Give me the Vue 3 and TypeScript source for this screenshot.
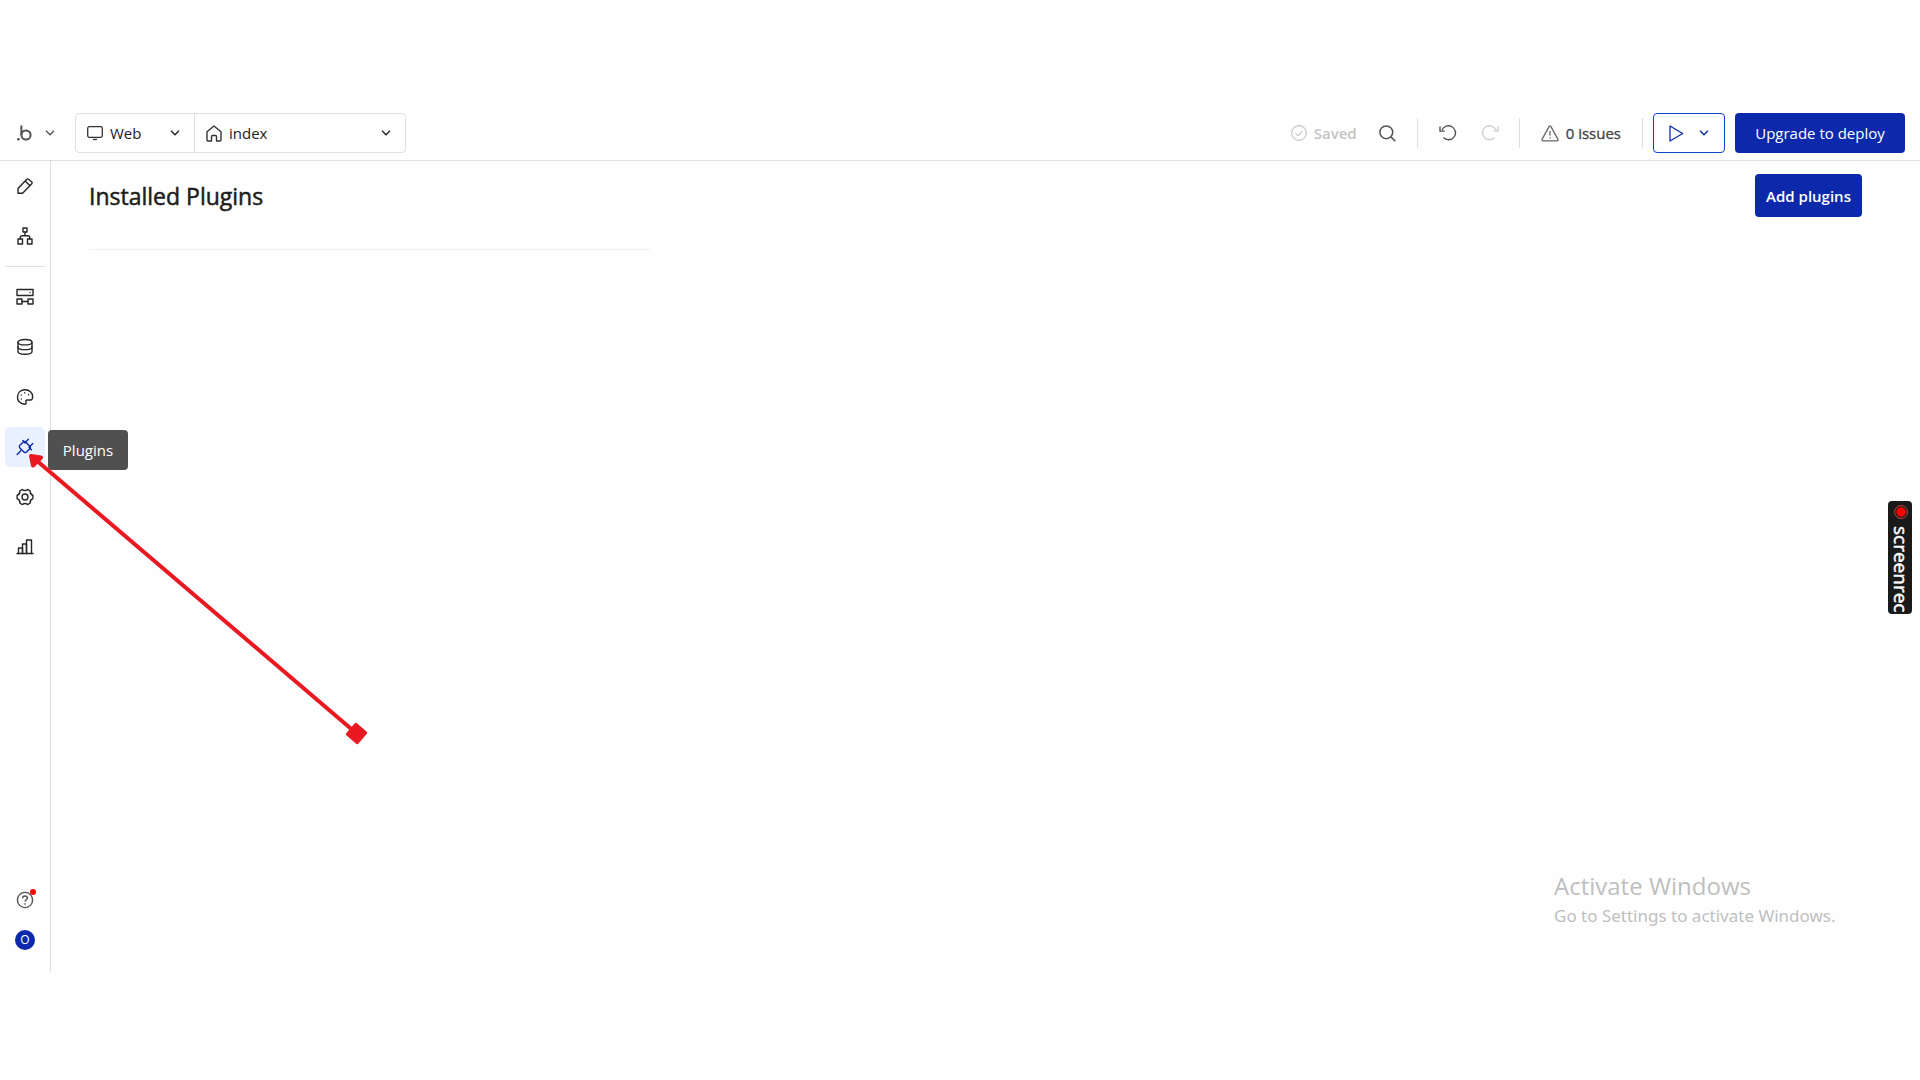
<script setup lang="ts">
import { ref } from 'vue'

interface NavItem {
  label: string
  paths: string[]
}

const platform = ref('Web')
const page = ref('index')

const editing: NavItem[] = [
  { label: 'Design', paths: ['M2 11.5 L10.8 2.3 Q11.6 1.5 12.5 2.3 L15.8 5 Q16.6 5.9 15.8 6.7 L6.6 16.2 H2 Z', 'M9.4 4.3 L13.8 8.6'] },
  { label: 'Workflow', paths: ['M7 1 h4 v4 h-4 Z', 'M2 12 h4.5 v5 h-4.5 Z', 'M11.5 12 h4.5 v5 h-4.5 Z', 'M9 5 V8.7 M4.2 12 V10.7 Q4.2 8.7 6.2 8.7 H11.8 Q13.8 8.7 13.8 10.7 V12'] },
]

const project: NavItem[] = [
  { label: 'Backend', paths: ['M1 1.5 h16 v6 h-16 Z', 'M1 11 h5 v5 h-5 Z', 'M12 11 h5 v5 h-5 Z', 'M6 13.5 H12', 'M14 4.5 v.1'] },
  { label: 'Data', paths: ['M2 4.2 C2 .6 16 .6 16 4.2 C16 7.8 2 7.8 2 4.2 Z', 'M2 4.2 V13.6 C2 17.2 16 17.2 16 13.6 V4.2', 'M2 8.900 C2 12.500 16 12.500 16 8.900'] },
  { label: 'Styles', paths: ['M8.7 16.2 C3.8 15.6 1.3 12.4 1.5 8.6 C1.8 4.2 5 1.7 9 1.7 C13.6 1.7 16.5 4.8 16.6 8.4 C16.7 10.9 15.9 12 14.4 12 H11.3 C10 12 9.5 12.9 10 14.2 C10.4 15.6 9.8 16.3 8.7 16.2 Z', 'M5.2 7 v.1 M8.7 4.8 v.1 M12.6 6.8 v.1 M5.4 11 v.1'] },
  { label: 'Plugins', paths: ['M4.2 6.8 L7.7 3.8 Q8.7 3 9.6 4 L14 8.4 Q14.9 9.4 14 10.4 L10.8 13.8 Q9.6 15 8.2 14.3 L3.600 9.700 Q2.800 8 4.200 6.800 Z', 'M4.8 12.8 L1.2 16.6 M9.6 4 L12.400 1.2 M13.8 8.4 L16.8 5.6 M6.800 2.600 l2.4 2.4 M13 9.3 l2.4 2.4'] },
  { label: 'Settings', paths: ['M16.9 7.5 V10.5 Q13.8 11.8 14.2 15 L11.6 16.6 Q9 14.2 6.4 16.6 L3.8 15 Q4.2 11.8 1.1 10.5 V7.5 Q4.2 6.2 3.8 3 L6.4 1.4 Q9 3.8 11.6 1.4 L14.2 3 Q13.8 6.2 16.9 7.5 Z', 'M6 9 a3 3 0 1 0 6 0 a3 3 0 1 0 -6 0'] },
  { label: 'Logs', paths: ['M1 15.5 H17', 'M2.5 15.5 V10 H6.5 V15.5', 'M6.5 15.5 V6 H10.5 V15.5', 'M10.5 15.5 V2 H15.5 V15.5'] },
]

const active = ref('Plugins')
</script>

<template>
  <div class="screen">
    <div class="app">
      <header class="topbar">
        <button class="brand" type="button" aria-label="Main menu">
          <svg width="16" height="16" viewBox="0 0 16 16" fill="none" stroke="#525252" stroke-width="2">
            <circle cx="9" cy="10" r="4.6" />
            <path d="M4.4 .5 V10" />
            <circle cx="1.4" cy="14.2" r="1.3" fill="#525252" stroke="none" />
          </svg>
          <svg width="10" height="6" viewBox="0 0 10 6" fill="none" stroke="#525252" stroke-width="1.3"><path d="M1 .8 L5 4.8 L9 .8" /></svg>
        </button>

        <div class="picker">
          <label class="field platform">
            <svg width="16" height="16" viewBox="0 0 16 16" fill="none" stroke="#333" stroke-width="1.3">
              <rect x=".7" y="1.7" width="14.6" height="10.6" rx="1.5" />
              <path d="M6 14.5 h4" />
            </svg>
            <select v-model="platform" aria-label="Platform"><option>Web</option></select>
            <svg class="caret" width="10" height="6" viewBox="0 0 10 6" fill="none" stroke="#222" stroke-width="1.4"><path d="M1 .8 L5 4.8 L9 .8" /></svg>
          </label>
          <label class="field page">
            <svg width="16" height="17" viewBox="0 0 16 17" fill="none" stroke="#333" stroke-width="1.4" stroke-linejoin="round">
              <path d="M1 15 V6.7 L8 1 L15 6.7 V15 Q15 16 14 16 H10.5 V11.5 Q10.5 10.5 9.5 10.5 H6.5 Q5.5 10.5 5.5 11.5 V16 H2 Q1 16 1 15 Z" />
            </svg>
            <select v-model="page" aria-label="Page"><option>index</option></select>
            <svg class="caret" width="10" height="6" viewBox="0 0 10 6" fill="none" stroke="#222" stroke-width="1.4"><path d="M1 .8 L5 4.8 L9 .8" /></svg>
          </label>
        </div>

        <div class="status">
          <span class="saved">
            <svg width="16" height="16" viewBox="0 0 16 16" fill="none" stroke="#c4c4c4" stroke-width="1.1">
              <circle cx="8" cy="8" r="7.4" />
              <path d="M4.6 8.3 L7 10.6 L11.4 5.8" />
            </svg>
            Saved
          </span>
          <button class="icon search" type="button" aria-label="Search">
            <svg width="17" height="17" viewBox="0 0 17 17" fill="none" stroke="#525252" stroke-width="1.5">
              <circle cx="7.3" cy="7.3" r="6.4" />
              <path d="M11.9 11.9 L16.3 16.3" />
            </svg>
          </button>
          <i class="bar"></i>
          <button class="icon undo" type="button" aria-label="Undo">
            <svg width="18" height="16" viewBox="0 0 18 16" fill="none" stroke="#525252" stroke-width="1.4">
              <path d="M3 5.2 A7 7 0 1 1 4.4 12.6" />
              <path d="M1 1.6 V6.1 H5.8" />
            </svg>
          </button>
          <button class="icon redo" type="button" aria-label="Redo" disabled>
            <svg width="18" height="16" viewBox="0 0 18 16" fill="none" stroke="#cfcfcf" stroke-width="1.4">
              <path d="M15 5.2 A7 7 0 1 0 13.6 12.6" />
              <path d="M17 1.6 V6.1 H12.2" />
            </svg>
          </button>
          <i class="bar"></i>
          <button class="issues" type="button">
            <svg width="18" height="17" viewBox="0 0 18 17" fill="none" stroke="#666" stroke-width="1.3" stroke-linejoin="round">
              <path d="M8.2 1.4 Q9 .4 9.8 1.4 L17 14.4 Q17.4 15.8 16 15.8 H2 Q.6 15.8 1 14.4 Z" />
              <path d="M9 6 V10.5 M9 12.3 V13.6" />
            </svg>
            0 issues
          </button>
          <i class="bar"></i>
        </div>

        <button class="preview" type="button" aria-label="Preview">
          <svg width="15" height="17" viewBox="0 0 15 17" fill="none" stroke="#0c29ab" stroke-width="1.3" stroke-linejoin="round"><path d="M1 1 L13.7 8.5 L1 16 Z" /></svg>
          <svg width="10" height="6" viewBox="0 0 10 6" fill="none" stroke="#0c29ab" stroke-width="1.4"><path d="M1 .8 L5 4.8 L9 .8" /></svg>
        </button>
        <button class="deploy" type="button">Upgrade to deploy</button>
      </header>

      <div class="body">
        <nav class="rail">
          <button v-for="item in editing" :key="item.label" class="nav" type="button" :aria-label="item.label">
            <svg width="18" height="18" viewBox="0 0 18 18"><path v-for="d in item.paths" :key="d" :d="d" /></svg>
          </button>
          <hr class="split">
          <button
            v-for="item in project"
            :key="item.label"
            class="nav"
            :class="{ active: item.label === active }"
            type="button"
            :aria-label="item.label"
            @click="active = item.label"
          >
            <svg width="18" height="18" viewBox="0 0 18 18"><path v-for="d in item.paths" :key="d" :d="d" /></svg>
            <span v-if="item.label === active" class="tip">{{ item.label }}</span>
          </button>
          <button class="help" type="button" aria-label="Help">
            <svg width="18" height="18" viewBox="0 0 18 18" fill="none" stroke="#525252" stroke-width="1.4">
              <circle cx="9" cy="9" r="7.6" />
              <path d="M6.6 7.2 Q6.8 5 9 5 Q11.4 5 11.4 7 Q11.4 8 10.2 8.8 Q9 9.5 9 10.6 M9 12.2 V13.8" />
            </svg>
            <span class="dot"></span>
          </button>
          <button class="avatar" type="button">O</button>
        </nav>

        <main class="content">
          <div class="heading">
            <h1>Installed Plugins</h1>
            <button class="add" type="button">Add plugins</button>
          </div>
          <hr class="rule">
        </main>
      </div>
    </div>

    <svg class="pointer" width="346" height="300" viewBox="0 0 346 300" aria-hidden="true">
      <path d="M12 11 L332 284" stroke="#ea1820" stroke-width="4" />
      <path d="M7 7 L17 8.500 L9 16.500 Z" fill="#ea1820" stroke="#ea1820" stroke-width="4" stroke-linejoin="round" />
      <rect x="325" y="277" width="15" height="15" rx="1" transform="rotate(41 332.500 284.500)" fill="#ea1820" stroke="#ea1820" />
    </svg>

    <aside class="recorder">
      <svg width="14" height="14" viewBox="0 0 14 14">
        <circle cx="7" cy="7" r="6.400" fill="none" stroke="#d9423c" />
        <circle cx="7" cy="7" r="4.700" fill="#f00" />
      </svg>
      <span>screenrec</span>
    </aside>

    <div class="watermark">
      <p class="title">Activate Windows</p>
      <p class="hint">Go to Settings to activate Windows.</p>
    </div>
  </div>
</template>

<style>
body {
  margin: 0;
  background: #fefefe;
}
</style>

<style scoped>
.screen {
  position: relative;
  box-sizing: border-box;
  min-height: 100vh;
  padding: 106px 0 108px;
  display: flex;
  flex-direction: column;
  font-family: "Open Sans", "Noto Sans", sans-serif;
  font-size: 15px;
  line-height: 20px;
  color: #1c1c1c;
}
button {
  margin: 0;
  padding: 0;
  border: 0;
  background: none;
  font: inherit;
  color: inherit;
  cursor: pointer;
}
svg {
  display: block;
  flex: none;
}
.app {
  flex: 1;
  display: flex;
  flex-direction: column;
}
.topbar {
  display: flex;
  align-items: center;
  height: 54px;
  padding: 0 15px 0 17px;
  border-bottom: 1px solid #dedede;
}
.brand {
  display: flex;
  align-items: center;
  gap: 12px;
  margin-right: 20px;
}
.picker {
  display: flex;
  box-sizing: border-box;
  height: 40px;
  border: 1px solid #e0e0e0;
  border-radius: 4px;
}
.field {
  display: flex;
  align-items: center;
  box-sizing: border-box;
  gap: 7px;
  padding: 0 14px 0 11px;
}
.platform {
  width: 119px;
  border-right: 1px solid #e0e0e0;
}
.page {
  width: 210px;
}
select {
  flex: 1;
  min-width: 0;
  padding: 0;
  border: 0;
  appearance: none;
  background: none;
  font: inherit;
  color: inherit;
}
.status {
  display: flex;
  align-items: center;
  margin-left: auto;
}
.saved {
  display: flex;
  align-items: center;
  gap: 7px;
  color: #c4c4c4;
  font-weight: 600;
}
.search {
  margin: 0 21px 0 22px;
}
.undo {
  margin: 0 24px 0 21px;
}
.redo {
  margin-right: 20px;
}
.bar {
  width: 1px;
  height: 30px;
  background: #dedede;
}
.issues {
  display: flex;
  align-items: center;
  gap: 7px;
  margin: 0 21px;
  color: #444;
  -webkit-text-stroke: 0.3px #444;
}
.preview {
  display: flex;
  align-items: center;
  justify-content: space-between;
  box-sizing: border-box;
  width: 72px;
  height: 40px;
  margin: 0 10px;
  padding: 0 15px;
  border: 1px solid #0c45c9;
  border-radius: 4px;
}
.deploy {
  width: 170px;
  height: 40px;
  border-radius: 4px;
  background: #0c29ab;
  color: #fff;
}
.body {
  flex: 1;
  display: flex;
}
.rail {
  display: flex;
  flex-direction: column;
  align-items: center;
  box-sizing: border-box;
  width: 51px;
  padding: 5px 5px 22px;
  border-right: 1px solid #dedede;
}
.nav {
  position: relative;
  display: flex;
  align-items: center;
  justify-content: center;
  width: 40px;
  height: 40px;
  margin-bottom: 10px;
  border-radius: 5px;
}
.nav svg {
  fill: none;
  stroke: #262626;
  stroke-width: 1.4;
  stroke-linecap: round;
  stroke-linejoin: round;
}
.active {
  background: #e9f1ff;
}
.nav.active svg {
  stroke: #0c29ab;
}
.split {
  width: 40px;
  height: 1px;
  margin: 0 0 10px;
  border: 0;
  background: #dedede;
}
.tip {
  position: absolute;
  left: 43px;
  top: 3px;
  width: 80px;
  border-radius: 4px;
  background: #505050;
  color: #fff;
  line-height: 40px;
}
.help {
  position: relative;
  margin-top: auto;
  margin-bottom: 21px;
}
.dot {
  position: absolute;
  right: -2px;
  top: -2px;
  width: 6px;
  height: 6px;
  border-radius: 50%;
  background: #f00;
}
.avatar {
  width: 20px;
  height: 20px;
  border-radius: 50%;
  background: #0c29ab;
  color: #fff;
  font-size: 12px;
}
.content {
  flex: 1;
  padding-top: 13px;
}
.heading {
  display: flex;
  align-items: center;
  justify-content: space-between;
  margin: 0 58px 0 38px;
}
h1 {
  margin: 0;
  font-size: 23px;
  line-height: 32px;
  font-weight: 400;
  -webkit-text-stroke: 0.5px #1c1c1c;
}
.add {
  width: 107px;
  height: 43px;
  border-radius: 4px;
  background: #0c29ab;
  color: #fff;
  font-weight: 600;
}
.rule {
  width: 30%;
  height: 1px;
  margin: 32px 0 0 38px;
  border: 0;
  background: #f0f0f0;
}
.pointer {
  position: absolute;
  left: 24px;
  top: 449px;
  pointer-events: none;
}
.recorder {
  position: absolute;
  right: 8px;
  top: 501px;
  display: flex;
  flex-direction: column;
  align-items: center;
  gap: 7px;
  box-sizing: border-box;
  width: 24px;
  height: 113px;
  padding: 4px 0 0 1px;
  border-radius: 4px;
  background: #1a1a1a;
  color: #fff;
  font-size: 19px;
  line-height: 20px;
  -webkit-text-stroke: 0.5px #fff;
}
.recorder span {
  writing-mode: vertical-rl;
}
.watermark {
  position: absolute;
  left: 1554px;
  top: 870px;
  color: #bfbfbf;
  white-space: nowrap;
}
.watermark p {
  margin: 0;
}
.title {
  font-size: 24px;
  line-height: 32px;
}
.hint {
  font-family: "Noto Sans", "Open Sans", sans-serif;
  font-size: 17px;
  line-height: 28px;
}
</style>
